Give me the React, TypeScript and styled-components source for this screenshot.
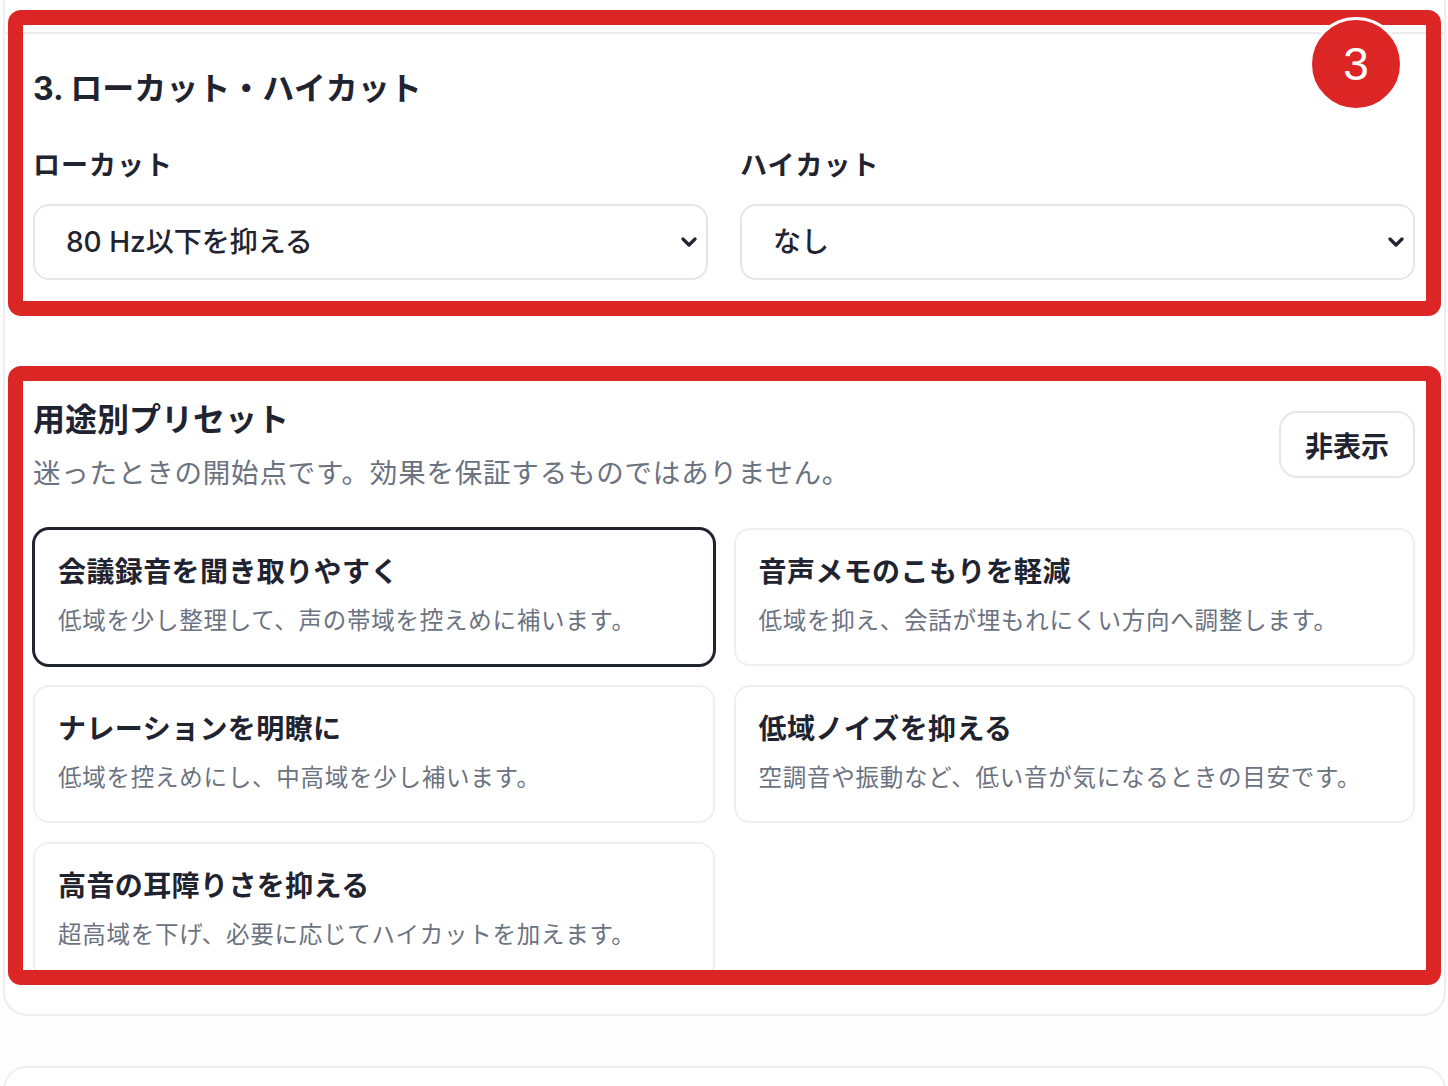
import { useState } from "react";
import styled, { createGlobalStyle, css } from "styled-components";

const GlobalStyle = createGlobalStyle`
  body {
    margin: 0;
    background: #fdfdfd;
    font-family: "Inter", "Noto Sans CJK JP", sans-serif;
    color: #1f2430;
  }
`;

type Preset = {
  id: string;
  title: string;
  description: string;
};

const PRESETS: Preset[] = [
  {
    id: "meeting",
    title: "会議録音を聞き取りやすく",
    description: "低域を少し整理して、声の帯域を控えめに補います。",
  },
  {
    id: "memo",
    title: "音声メモのこもりを軽減",
    description: "低域を抑え、会話が埋もれにくい方向へ調整します。",
  },
  {
    id: "narration",
    title: "ナレーションを明瞭に",
    description: "低域を控えめにし、中高域を少し補います。",
  },
  {
    id: "rumble",
    title: "低域ノイズを抑える",
    description: "空調音や振動など、低い音が気になるときの目安です。",
  },
  {
    id: "harsh",
    title: "高音の耳障りさを抑える",
    description: "超高域を下げ、必要に応じてハイカットを加えます。",
  },
];

const LOW_CUT_OPTIONS = ["なし", "80 Hz以下を抑える", "120 Hz以下を抑える"];
const HIGH_CUT_OPTIONS = ["なし", "8 kHz以上を抑える", "12 kHz以上を抑える"];

export default function App() {
  const [lowCut, setLowCut] = useState("80 Hz以下を抑える");
  const [highCut, setHighCut] = useState("なし");
  const [selected, setSelected] = useState("meeting");

  return (
    <>
      <GlobalStyle />
      <Page>
        <Card>
          <Divider />

          <Section>
            <Highlight $top={-24} $bottom={-15} />
            <StepBadge>3</StepBadge>

            <SectionTitle>3. ローカット・ハイカット</SectionTitle>
            <FieldRow>
              <Field>
                <FieldLabel htmlFor="low-cut">ローカット</FieldLabel>
                <SelectWrap>
                  <Select
                    id="low-cut"
                    value={lowCut}
                    onChange={(e) => setLowCut(e.target.value)}
                  >
                    {LOW_CUT_OPTIONS.map((opt) => (
                      <option key={opt}>{opt}</option>
                    ))}
                  </Select>
                  <Chevron />
                </SelectWrap>
              </Field>
              <Field>
                <FieldLabel htmlFor="high-cut">ハイカット</FieldLabel>
                <SelectWrap>
                  <Select
                    id="high-cut"
                    value={highCut}
                    onChange={(e) => setHighCut(e.target.value)}
                  >
                    {HIGH_CUT_OPTIONS.map((opt) => (
                      <option key={opt}>{opt}</option>
                    ))}
                  </Select>
                  <Chevron />
                </SelectWrap>
              </Field>
            </FieldRow>
          </Section>

          <PresetSection>
            <Highlight $top={15} $bottom={-5} />

            <PresetHeader>
              <div>
                <SectionTitle>用途別プリセット</SectionTitle>
                <Subtitle>
                  迷ったときの開始点です。効果を保証するものではありません。
                </Subtitle>
              </div>
              <GhostButton type="button">非表示</GhostButton>
            </PresetHeader>

            <PresetGrid>
              {PRESETS.map((preset) => (
                <PresetCard
                  key={preset.id}
                  type="button"
                  $active={selected === preset.id}
                  onClick={() => setSelected(preset.id)}
                >
                  <PresetTitle>{preset.title}</PresetTitle>
                  <PresetDescription>{preset.description}</PresetDescription>
                </PresetCard>
              ))}
            </PresetGrid>
          </PresetSection>
        </Card>

        <NextCard />
      </Page>
    </>
  );
}

const Chevron = () => (
  <ChevronIcon width="16" height="10" viewBox="0 0 16 10" aria-hidden>
    <polyline
      points="2,2 8,8 14,2"
      fill="none"
      stroke="#1f2430"
      strokeWidth="3.2"
      strokeLinecap="round"
      strokeLinejoin="round"
    />
  </ChevronIcon>
);

const Page = styled.div`
  padding: 0 2px 0 3px;
  overflow: hidden;
`;

const Card = styled.div`
  margin-top: -40px;
  padding: 70px 29px 34px 28px;
  background: #ffffff;
  border: 2px solid #eeeef0;
  border-radius: 24px;
`;

const Divider = styled.div`
  height: 2px;
  margin: 0 -29px 0 -28px;
  background: #ebebee;
`;

const Section = styled.section`
  position: relative;
  padding: 32px 0 21px;
`;

const PresetSection = styled.section`
  position: relative;
  margin-top: 50px;
  padding-top: 46px;
`;

// red callout frame laid over a section
const Highlight = styled.div<{ $top: number; $bottom: number }>`
  position: absolute;
  left: -25px;
  right: -26px;
  top: ${(p) => p.$top}px;
  bottom: ${(p) => p.$bottom}px;
  border: 15px solid #dc2626;
  border-radius: 13px;
  pointer-events: none;
  z-index: 2;
`;

const StepBadge = styled.div`
  position: absolute;
  top: -17px;
  right: 12px;
  z-index: 3;
  width: 88px;
  height: 88px;
  border-radius: 50%;
  border: 3px solid #ffffff;
  background: #dc2626;
  color: #ffffff;
  display: flex;
  align-items: center;
  justify-content: center;
  font-family: "Liberation Sans", "Noto Sans", sans-serif;
  font-size: 46px;
  line-height: 1;
`;

const SectionTitle = styled.h2`
  margin: 0;
  font-size: 32px;
  line-height: 45px;
  font-weight: 700;
  color: #1f2430;
`;

const FieldRow = styled.div`
  display: grid;
  grid-template-columns: 1fr 1fr;
  gap: 32px;
  margin-top: 35px;
`;

const Field = styled.div`
  display: flex;
  flex-direction: column;
  gap: 18px;
`;

const FieldLabel = styled.label`
  font-size: 27px;
  line-height: 40px;
  font-weight: 700;
  color: #1f2430;
  letter-spacing: 1px;
`;

const SelectWrap = styled.div`
  position: relative;
`;

const Select = styled.select`
  appearance: none;
  width: 100%;
  height: 76px;
  box-sizing: border-box;
  padding: 0 56px 0 31px;
  border: 2px solid #e4e6ea;
  border-radius: 16px;
  background: #ffffff;
  font-family: inherit;
  font-size: 28px;
  font-weight: 500;
  color: #1f2430;
  cursor: pointer;
`;

const ChevronIcon = styled.svg`
  position: absolute;
  right: 11px;
  top: 50%;
  transform: translateY(-50%);
  pointer-events: none;
`;

const PresetHeader = styled.div`
  display: flex;
  justify-content: space-between;
  align-items: flex-start;
`;

const Subtitle = styled.p`
  margin: 10px 0 0;
  font-size: 27.5px;
  line-height: 42px;
  letter-spacing: 0.8px;
  color: #6b7280;
`;

const GhostButton = styled.button`
  margin-top: 14px;
  width: 136px;
  height: 67px;
  border: 2px solid #e4e6ea;
  border-radius: 18px;
  background: #ffffff;
  font-family: inherit;
  font-size: 28px;
  font-weight: 700;
  color: #1f2430;
  cursor: pointer;
`;

const PresetGrid = styled.div`
  display: grid;
  grid-template-columns: 1fr 1fr;
  column-gap: 19px;
  row-gap: 19px;
  margin-top: 34px;
`;

const PresetCard = styled.button<{ $active: boolean }>`
  display: flex;
  flex-direction: column;
  align-items: flex-start;
  height: 138px;
  box-sizing: border-box;
  padding: 22px 23px 0;
  border: 2px solid #efeff1;
  border-radius: 16px;
  background: #ffffff;
  font-family: inherit;
  text-align: left;
  cursor: pointer;

  ${(p) =>
    p.$active &&
    css`
      border-color: #1f2430;
      box-shadow: 0 0 0 1px #1f2430;
    `}
`;

const PresetTitle = styled.span`
  font-size: 28px;
  line-height: 40px;
  font-weight: 700;
  letter-spacing: 0.4px;
  color: #1f2430;
`;

const PresetDescription = styled.span`
  margin-top: 12px;
  font-size: 23.5px;
  line-height: 34px;
  letter-spacing: 0.75px;
  color: #6b7280;
`;

const NextCard = styled.div`
  margin-top: 50px;
  height: 120px;
  background: #ffffff;
  border: 2px solid #eeeef0;
  border-radius: 24px;
`;
